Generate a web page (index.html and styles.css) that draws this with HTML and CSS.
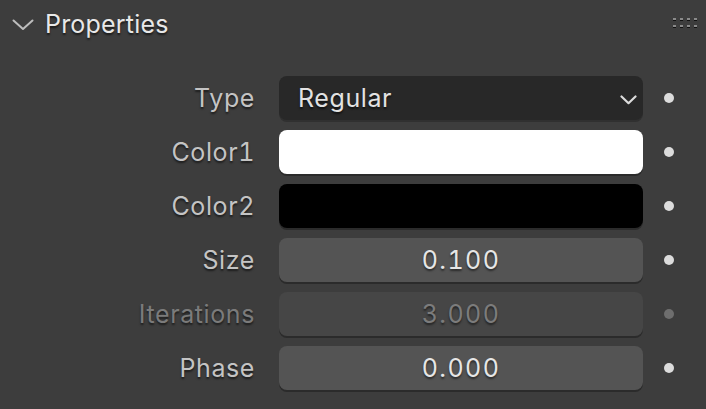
FILE: index.html
```html
<!DOCTYPE html>
<html>
<head>
<meta charset="utf-8">
<link rel="stylesheet" href="styles.css">
</head>
<body>
<div class="panel">
  <div class="header">
    <svg class="chev" width="22" height="12" viewBox="0 0 22 12"><polyline points="1.5,1.5 11,10 20.5,1.5" fill="none" stroke="#bdbdbd" stroke-width="2" stroke-linecap="round" stroke-linejoin="round"/></svg>
    <span class="title">Properties</span>
    <div class="grip">
      <i></i><i></i><i></i><i></i><i></i><i></i><i></i><i></i>
    </div>
  </div>
  <div class="rows">
    <div class="row">
      <div class="label">Type</div>
      <div class="field menu"><span>Regular</span>
        <svg class="dd" width="17" height="10" viewBox="0 0 17 10"><polyline points="1.5,1.5 8.5,8.2 15.5,1.5" fill="none" stroke="#dcdcdc" stroke-width="2.2" stroke-linecap="round" stroke-linejoin="round"/></svg>
      </div>
      <div class="dotcell"><span class="dot"></span></div>
    </div>
    <div class="row">
      <div class="label">Color1</div>
      <div class="field swatch white"></div>
      <div class="dotcell"><span class="dot"></span></div>
    </div>
    <div class="row">
      <div class="label">Color2</div>
      <div class="field swatch black"></div>
      <div class="dotcell"><span class="dot"></span></div>
    </div>
    <div class="row">
      <div class="label">Size</div>
      <div class="field num">0.100</div>
      <div class="dotcell"><span class="dot"></span></div>
    </div>
    <div class="row disabled">
      <div class="label">Iterations</div>
      <div class="field num">3.000</div>
      <div class="dotcell"><span class="dot"></span></div>
    </div>
    <div class="row">
      <div class="label">Phase</div>
      <div class="field num">0.000</div>
      <div class="dotcell"><span class="dot"></span></div>
    </div>
  </div>
</div>
</body>
</html>
```
FILE: styles.css
```css
html, body {
  margin: 0;
  padding: 0;
  background: #3d3d3d;
  width: 706px;
  height: 409px;
  overflow: hidden;
  font-family: Inter, "Open Sans", sans-serif;
  font-variant-numeric: tabular-nums;
}
.panel {
  display: flex;
  flex-direction: column;
}
.header {
  display: flex;
  align-items: center;
  height: 48px;
  padding-left: 12px;
  padding-right: 12px;
}
.chev {
  display: block;
  margin-top: 2px;
}
.title {
  margin-left: 11px;
  font-size: 25px;
  color: #e8e8e8;
  text-shadow: 0 2px 2px rgba(0,0,0,0.6);
  letter-spacing: 0.2px;
}
.grip {
  margin-left: auto;
  display: grid;
  grid-template-columns: repeat(4, 3px);
  grid-auto-rows: 3px;
  column-gap: 4px;
  row-gap: 4px;
  margin-top: -2px;
  margin-right: -3px;
}
.grip i {
  display: block;
  width: 3px;
  height: 2px;
  background: #8a8a8a;
  border-bottom: 1px solid #111;
}
.rows {
  display: flex;
  flex-direction: column;
  gap: 10px;
  padding-top: 28px;
}
.row {
  display: flex;
  align-items: flex-start;
  height: 44px;
}
.label {
  width: 255px;
  text-align: right;
  font-size: 25px;
  letter-spacing: 0.6px;
  line-height: 44px;
  color: #c4c4c4;
  text-shadow: 0 2px 2px rgba(0,0,0,0.55);
  padding-right: 24px;
  box-sizing: content-box;
}
.field {
  width: 364px;
  height: 44px;
  border-radius: 8px;
  box-sizing: border-box;
  box-shadow: 0 2px 0 #2b2b2b;
  font-size: 25px;
  line-height: 44px;
}
.menu {
  background: #282828;
  color: #e2e2e2;
  display: flex;
  align-items: center;
  padding-left: 19px;
  padding-right: 6px;
  letter-spacing: 0.6px;
  text-shadow: 0 2px 2px rgba(0,0,0,0.6);
  box-shadow: 0 2px 0 #303030;
}
.menu span { flex: 1; }
.dd { display: block; margin-top: 3px; }
.swatch.white { background: #ffffff; }
.swatch.black { background: #000000; }
.num {
  background: #545454;
  color: #e6e6e6;
  text-align: center;
  letter-spacing: 1.4px;
  text-shadow: 0 2px 2px rgba(0,0,0,0.5);
}
.dotcell {
  width: 52px;
  height: 44px;
  display: flex;
  align-items: center;
  justify-content: center;
}
.dot {
  width: 10px;
  height: 10px;
  border-radius: 50%;
  background: #dcdcdc;
}
.disabled .label { color: #7b7b7b; }
.disabled .num { background: #464646; color: #7c7c7c; }
.disabled .dot { background: #6e6e6e; }
```
